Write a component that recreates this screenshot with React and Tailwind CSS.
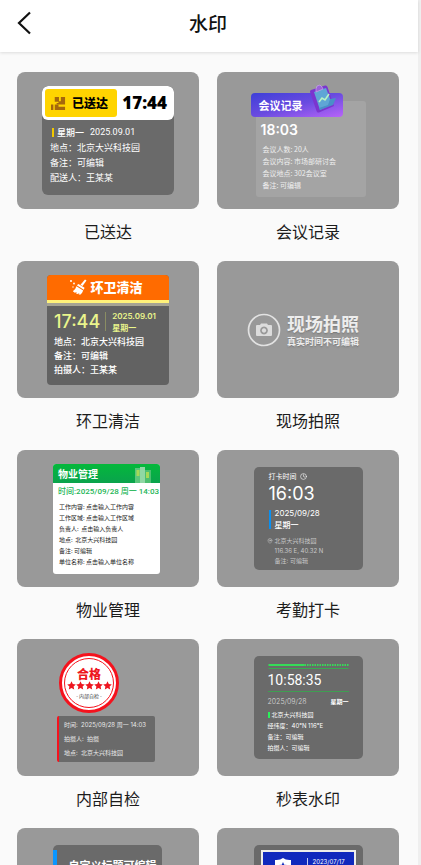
import { Clock, MapPin } from 'lucide-react'

function DeliveredMark() {
  return (
    <div className="h-[109px] w-[132px] overflow-hidden rounded-md bg-[#6a6a6a] text-white">
      <div className="flex h-[34px] items-center justify-between rounded-md bg-white py-[3px] pl-[3px] pr-[7px] text-black">
        <div className="flex h-7 w-[72px] items-center gap-[6px] rounded-[3px] bg-[#ffd400] pl-[6px]">
          <svg viewBox="0 0 16 16" className="h-[15px] w-[15px]" fill="#a5670c">
            <path d="M4 1h4.500v4.500h2V1H15v8H6V7.500h2V6H4z" />
            <path d="M0 9h2.500v6H0zM4 9h4v2.500h7V15H4z" />
          </svg>
          <span className="text-[12px] font-black">已送达</span>
        </div>
        <span className="font-['Noto_Sans','Noto_Sans_CJK_SC',sans-serif] text-[17px] font-black">17:44</span>
      </div>
      <div className="px-2 pt-[5px] text-[9px] leading-[15px]">
        <div className="flex items-center gap-[3px] pl-[2px]">
          <span className="h-[9px] w-[2px] bg-[#f0c800]" />
          <span className="font-medium">星期一</span>
          <span className="pl-[3px] font-['Roboto','Noto_Sans_CJK_SC',sans-serif]">2025.09.01</span>
        </div>
        <p>地点：北京大兴科技园</p>
        <p>备注：可编辑</p>
        <p>配送人：王某某</p>
      </div>
    </div>
  )
}

function MeetingMark() {
  return (
    <div className="w-[115px] pt-[9px] text-white">
      <div className="relative z-10 flex h-6 w-[92px] items-center rounded-[4px] bg-linear-to-br from-[#3d3fd8] via-[#6a4be0] to-[#b863f8] pl-2">
        <span className="text-[11px] font-bold">会议记录</span>
        <svg viewBox="0 0 28 30" className="absolute -top-[9px] right-[6px] h-[30px] w-7">
          <path d="M2 6 16 1.500Q18 1 18.500 3L25 22 10 28.500Q8 29 7.500 27L1 8Q.8 6.500 2 6z" fill="#7b35cf" />
          <path d="M5 8 17 4l6 16-12 6z" fill="#5fa6d6" />
          <path d="m10 24 9-3 2-6 6-1-3 7-13 5z" fill="#4a8fc8" />
          <path d="m7 5 1-3 3-1 2 2 1 2-7 3z" fill="#9a63d8" stroke="#c9a3ee" strokeWidth=".7" />
          <path d="m10 18 3-4 3 2 4-6" fill="none" stroke="#b8f3c4" strokeWidth="1.600" />
        </svg>
      </div>
      <div className="-mt-4 ml-[5px] h-24 rounded-[3px] bg-[#a4a4a4] pt-5">
        <p className="pl-[5px] font-['Inter','Noto_Sans_CJK_SC',sans-serif] text-[14px] leading-[18px] font-semibold">18:03</p>
        <div className="pt-[4px] pl-[7px] text-[7px] leading-[12px] text-[#efefef]">
          <p>会议人数: 20人</p>
          <p>会议内容: 市场部研讨会</p>
          <p>会议地点: 302会议室</p>
          <p>备注: 可编辑</p>
        </div>
      </div>
    </div>
  )
}

function SanitationMark() {
  return (
    <div className="h-[110px] w-[122px] overflow-hidden rounded-[4px] bg-[#626262] text-white">
      <div className="flex h-[25px] items-center justify-center gap-[3px] bg-[#ff6b00] pr-1">
        <svg viewBox="0 0 18 16" className="h-4 w-[18px]" fill="#fff">
          <path d="m16 .5 1.500 1-4 5.500-2-1.300z" />
          <path d="m9.500 5 6 3.800-.7 2-7-4.600z" />
          <path d="m7.400 7.200 6.800 4.400q-1 3-3 4.200l-1.600-.5 1-1.400-2 1-1.800-.7 1.300-1.300-2.300.8-2-1.500q2.800-1.600 3.600-5z" />
          <circle cx="2" cy="2" r="1" />
          <circle cx="5" cy="4.500" r=".9" />
          <circle cx="4" cy="8" r=".7" />
        </svg>
        <span className="text-[13px] font-black">环卫清洁</span>
      </div>
      <div className="h-[3px] bg-[#fff27a]" />
      <div className="h-[3px] bg-[#a6a493]" />
      <div className="px-[7px] pt-1">
        <div className="flex items-center text-[#eaf58c]">
          <span className="font-['Inter','Noto_Sans_CJK_SC',sans-serif] text-[18px] leading-6 font-medium">17:44</span>
          <span className="ml-[5px] h-[19px] w-px bg-[#8a8d63]" />
          <div className="ml-[6px] font-['Inter','Noto_Sans_CJK_SC',sans-serif] text-[8px] leading-[12px] font-semibold">
            <p>2025.09.01</p>
            <p>星期一</p>
          </div>
        </div>
        <div className="pt-px text-[9px] leading-[14px] font-medium">
          <p>地点：北京大兴科技园</p>
          <p>备注：可编辑</p>
          <p>拍摄人：王某某</p>
        </div>
      </div>
    </div>
  )
}

function ScenePhotoMark() {
  return (
    <div className="flex items-center gap-[6px] pr-[10px] text-[#ededed] text-shadow-sm">
      <svg viewBox="0 0 34 34" className="h-[34px] w-[34px]">
        <circle cx="17" cy="17" r="15.500" fill="none" stroke="#e2e2e2" strokeWidth="1.700" />
        <path fillRule="evenodd" fill="#dcdcdc" d="M10 12h3l1-1.500h6l1 1.500h3q1 0 1 1v9q0 1-1 1H10q-1 0-1-1v-9q0-1 1-1zm7 1.600a3.900 3.900 0 1 0 .01 0zm0 1.700a2.200 2.200 0 1 1-.01 0z" />
      </svg>
      <div>
        <p className="text-[18px] leading-[24px] font-bold">现场拍照</p>
        <p className="text-[9px] leading-[14px] font-bold">真实时间不可编辑</p>
      </div>
    </div>
  )
}

function PropertyMark() {
  return (
    <div className="mr-[3px] h-[110px] w-[107px] overflow-hidden rounded-[3px] bg-white text-[#222]">
      <div className="flex h-[19px] items-center justify-between bg-linear-to-b from-[#04b83a] to-[#0aa34c] pr-[8px] pl-[5px]">
        <span className="text-[10px] font-bold text-white">物业管理</span>
        <svg viewBox="0 0 17 16" className="h-4 w-[17px] self-end">
          <path d="M0 1h5v15H0z" fill="#5bc77b" />
          <path d="M5 0h5v16H5z" fill="#8fd8a4" />
          <path d="M10 3h6v13h-6z" fill="#4cbf70" />
          <path d="M1.500 3h3v6h-3zM11 5h3v6h-3z" fill="#a5d957" />
        </svg>
      </div>
      <p className="pt-[2px] pl-[5px] font-['Roboto','Noto_Sans_CJK_SC',sans-serif] text-[8px] leading-[14px] font-medium whitespace-nowrap text-[#22b555]">
        时间:2025/09/28 周一 14:03
      </p>
      <div className="pt-[2px] pl-[6px] text-[6px] leading-[11px]">
        <p>工作内容: 点击输入工作内容</p>
        <p>工作区域: 点击输入工作区域</p>
        <p>负责人:&nbsp; 点击输入负责人</p>
        <p>地点:&nbsp; 北京大兴科技园</p>
        <p>备注: 可编辑</p>
        <p>单位名称: 点击输入单位名称</p>
      </div>
    </div>
  )
}

function AttendanceMark() {
  return (
    <div className="h-[103px] w-[109px] rounded-[5px] bg-[#6a6a6a] pt-1 pl-[15px] text-white">
      <div className="flex items-center gap-[3px] text-[7px] leading-[10px]">
        <span>打卡时间</span>
        <Clock className="h-[7px] w-[7px]" />
      </div>
      <p className="font-['Inter','Noto_Sans_CJK_SC',sans-serif] text-[18px] leading-[26px]">16:03</p>
      <div className="flex items-center gap-1">
        <span className="h-[19px] w-[2px] bg-[#0a8ff0]" />
        <div className="font-['Inter','Noto_Sans_CJK_SC',sans-serif] text-[8px] leading-[12px]">
          <p>2025/09/28</p>
          <p className="font-medium">星期一</p>
        </div>
      </div>
      <div className="-ml-[2px] flex gap-[2px] pt-[5px] text-[6px] leading-[10px] text-[#c8c8c8]">
        <MapPin className="mt-[2px] h-[6px] w-[6px]" />
        <div className="font-['Inter','Noto_Sans_CJK_SC',sans-serif]">
          <p>北京大兴科技园</p>
          <p>116.36 E, 40.32 N</p>
          <p>备注: 可编辑</p>
        </div>
      </div>
    </div>
  )
}

function InspectionMark() {
  return (
    <div className="mr-[4px] w-[98px]">
      <div className="ml-[2px] flex h-[60px] w-[60px] items-center justify-center rounded-full border-[3px] border-[#f5121d] bg-white p-[2px]">
        <div className="flex h-full w-full flex-col items-center rounded-full border border-[#f5121d] pt-[7px]">
          <span className="text-[12px] leading-[15px] font-black text-[#ee1620]">合格</span>
          <svg viewBox="0 0 45 9" className="h-[9px] w-[45px] shrink-0" fill="#ee1620">
            {[0, 9, 18, 27, 36].map((x) => (
              <path key={x} transform={`translate(${x} 0)`} d="M4.500.3 5.800 3l3 .4-2.200 2.100.6 3.100-2.700-1.500-2.700 1.500.6-3.100L.2 3.400l3-.4z" />
            ))}
          </svg>
          <span className="text-[5px] leading-[11px] whitespace-nowrap text-[#444]">- 内部自检 -</span>
        </div>
      </div>
      <div className="mt-[3px] h-[46px] rounded-[2px] border-l-2 border-[#f5121d] bg-[#6a6a6a] pt-[2px] pl-[5px] font-['Inter','Noto_Sans_CJK_SC',sans-serif] text-[6px] leading-[14px] text-[#e8e8e8]">
        <p>时间:&nbsp; 2025/09/28 周一 14:03</p>
        <p>拍摄人:&nbsp; 拍摄</p>
        <p>地点:&nbsp; 北京大兴科技园</p>
      </div>
    </div>
  )
}

function StopwatchMark() {
  return (
    <div className="h-[103px] w-[109px] rounded-[5px] bg-[#6a6a6a] px-[14px] pt-2 text-white">
      <svg viewBox="0 0 80 5" className="h-[5px] w-full">
        <path d="M0 0h36v2H0z" fill="#35dc58" />
        <path d="M36 1h44" stroke="#35dc58" strokeWidth="2" strokeDasharray="1.500 1" />
        <path d="M0 4.500h80" stroke="#39ab50" />
      </svg>
      <p className="border-b border-[#3f9e52] font-['Roboto','Noto_Sans_CJK_SC',sans-serif] text-[14px] leading-[22px] font-normal">10:58:35</p>
      <div className="flex items-center justify-between pt-1 font-['Inter','Noto_Sans_CJK_SC',sans-serif] leading-[12px]">
        <span className="text-[7px] font-light text-[#d8d8d8]">2025/09/28</span>
        <span className="text-[6px] font-bold">星期一</span>
      </div>
      <div className="pt-px font-['Inter','Noto_Sans_CJK_SC',sans-serif] text-[6px] leading-[11px]">
        <div className="flex items-center gap-[2px]">
          <span className="h-[6px] w-[2px] bg-[#2af05a]" />
          <span>北京大兴科技园</span>
        </div>
        <p>经纬度：40°N 116°E</p>
        <p>备注：可编辑</p>
        <p>拍摄人：可编辑</p>
      </div>
    </div>
  )
}

function CustomTitleMark() {
  return (
    <div className="mr-[2px] flex h-[103px] w-[109px] rounded-[5px] bg-[#6a6a6a] pt-[5px] text-white">
      <span className="h-[90px] w-1 bg-[#0a96ff]" />
      <p className="pt-[7px] pl-3 text-[11px] leading-[16px] font-bold whitespace-nowrap">自定义标题可编辑</p>
    </div>
  )
}

function ShieldMark() {
  return (
    <div className="h-[103px] w-[109px] rounded-[5px] bg-[#6a6a6a] px-[7px] pt-[5px] text-white">
      <div className="flex h-[90px] items-start border-2 border-[#eeeeea] bg-[#1029bd] pt-[6px] pl-3">
        <svg viewBox="0 0 16 18" className="h-[18px] w-4">
          <path d="M0 2q5 .5 8-2 3 2.500 8 2v7q0 6-8 9-8-3-8-9z" fill="#fff" />
          <path d="m8 4 1.200 2.800 3 .2-2.300 2 .8 3L8 10.400 5.300 12l.8-3-2.300-2 3-.2z" fill="#1029bd" />
        </svg>
        <span className="ml-4 h-4 w-px bg-[#c5cbf0]" />
        <span className="pl-[5px] font-['Inter','Noto_Sans_CJK_SC',sans-serif] text-[6px] leading-[8px]">2023/07/17</span>
      </div>
    </div>
  )
}

const templates = [
  { name: '已送达', Mark: DeliveredMark },
  { name: '会议记录', Mark: MeetingMark },
  { name: '环卫清洁', Mark: SanitationMark },
  { name: '现场拍照', Mark: ScenePhotoMark },
  { name: '物业管理', Mark: PropertyMark },
  { name: '考勤打卡', Mark: AttendanceMark },
  { name: '内部自检', Mark: InspectionMark },
  { name: '秒表水印', Mark: StopwatchMark },
  { name: '自定义标题', Mark: CustomTitleMark },
  { name: '执勤巡逻', Mark: ShieldMark },
]

export default function App() {
  return (
    <div lang="zh-CN" className="h-screen overflow-hidden bg-[#efefef] pr-[3px] font-['Noto_Sans_CJK_SC',sans-serif]">
      <div className="flex h-full flex-col bg-[#fafafa]">
        <header className="relative z-10 grid h-[52px] shrink-0 grid-cols-[48px_1fr_48px] items-center bg-white pb-[6px] shadow-[0_1px_3px_rgba(0,0,0,0.12)]">
          <button type="button" aria-label="返回" className="flex justify-center">
            <svg viewBox="0 0 14 24" className="h-6 w-[14px]" fill="none" stroke="#111" strokeWidth="2.200">
              <path d="M13 1.500 2 12l11 10.500" />
            </svg>
          </button>
          <h1 className="pr-[2px] text-center text-[19px] font-medium text-[#111]">水印</h1>
        </header>
        <main className="grid grid-cols-2 gap-x-[18px] overflow-hidden pt-5 pr-[19px] pl-[17px]">
          {templates.map(({ name, Mark }) => (
            <button key={name} type="button" className="flex flex-col text-left">
              <div className="flex h-[137px] w-full items-center justify-center rounded-lg bg-[#999]">
                <Mark />
              </div>
              <span className="h-[52px] w-full pt-[10px] text-center text-[16px] leading-6 text-[#1c1c1c]">{name}</span>
            </button>
          ))}
        </main>
      </div>
    </div>
  )
}
